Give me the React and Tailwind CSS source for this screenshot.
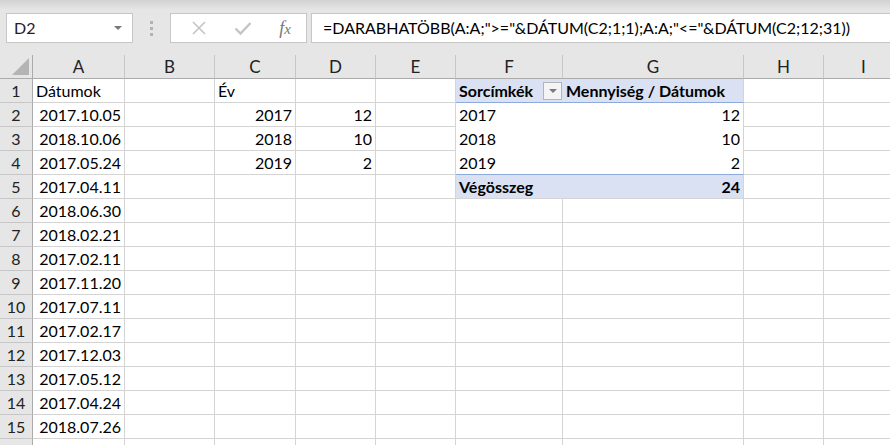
import React from 'react';

const cols = [
  { key: 'A', w: 92 },
  { key: 'B', w: 90 },
  { key: 'C', w: 81 },
  { key: 'D', w: 80 },
  { key: 'E', w: 80 },
  { key: 'F', w: 107 },
  { key: 'G', w: 181 },
  { key: 'H', w: 80 },
  { key: 'I', w: 80 },
];

const dates = [
  '2017.10.05', '2018.10.06', '2017.05.24', '2017.04.11', '2018.06.30',
  '2018.02.21', '2017.02.11', '2017.11.20', '2017.07.11', '2017.02.17',
  '2017.12.03', '2017.05.12', '2017.04.24', '2018.07.26',
];

const years = { 2: ['2017', '12'], 3: ['2018', '10'], 4: ['2019', '2'] };

function cellContent(r, c) {
  if (c === 'A') return r === 1 ? { t: 'Dátumok' } : dates[r - 2] ? { t: dates[r - 2], right: true } : null;
  if (c === 'C') return r === 1 ? { t: 'Év' } : years[r] ? { t: years[r][0], right: true } : null;
  if (c === 'D') return years[r] ? { t: years[r][1], right: true } : null;
  if (c === 'F') {
    if (r === 1) return { t: 'Sorcímkék', bold: true };
    if (years[r]) return { t: years[r][0] };
    if (r === 5) return { t: 'Végösszeg', bold: true };
  }
  if (c === 'G') {
    if (r === 1) return { t: 'Mennyiség / Dátumok', bold: true };
    if (years[r]) return { t: years[r][1], right: true };
    if (r === 5) return { t: '24', bold: true, right: true };
  }
  return null;
}

function Cell({ r, c, w }) {
  const v = cellContent(r, c);
  const inPivot = (c === 'F' || c === 'G') && r <= 5;
  const band = inPivot && (r === 1 || r === 5);
  let cls = 'relative h-6 shrink-0 flex items-center px-[3px] text-[16px] text-black ';
  if (inPivot) {
    cls += band ? 'bg-[#d9e1f2] ' : 'bg-white ';
    cls += c === 'G' ? 'border-r border-r-[#d4d4d4] ' : '';
    if (r === 1) cls += 'border-b border-b-[#8ea9db] ';
    else if (r === 4) cls += 'border-b border-b-[#8ea9db] ';
    else if (r === 5) cls += 'border-b border-b-[#d4d4d4] ';
  } else {
    cls += 'border-r border-b border-[#d4d4d4] ';
  }
  if (v && v.right) cls += 'justify-end ';
  if (v && v.bold) cls += 'font-bold ';
  return (
    <div className={cls} style={{ width: w }}>
      {v && <span className="whitespace-nowrap leading-none">{v.t}</span>}
      {r === 1 && c === 'F' && (
        <div className="absolute right-[1px] top-[3px] w-[19px] h-[18px] border border-[#b4b4b4] bg-[#f4f4f4] flex items-center justify-center">
          <svg width="8" height="5" viewBox="0 0 8 5"><path d="M0 0h8L4 4z" fill="#7a7a7a" /></svg>
        </div>
      )}
    </div>
  );
}

export default function App() {
  const rows = Array.from({ length: 16 }, (_, i) => i + 1);
  return (
    <div className="w-[890px] h-[445px] overflow-hidden bg-[#e6e6e6] font-['Lato','Liberation_Sans',sans-serif]">
      {/* formula bar */}
      <div className="h-[55px] bg-gradient-to-b from-[#d2d2d2] via-[#e6e6e6] via-[18%] to-[#e6e6e6] flex items-start pt-[13px] pl-[6px]">
        <div className="w-[127px] h-[30px] bg-white border border-[#c6c6c6] flex items-center justify-between pl-[7px] pr-[10px]">
          <span className="text-[16px] text-[#222]">D2</span>
          <svg width="8" height="5" viewBox="0 0 8 5"><path d="M0 0h8L4 4z" fill="#777" /></svg>
        </div>
        <div className="w-[37px] h-[30px] flex flex-col items-center justify-center gap-[3px]">
          <div className="w-[3px] h-[3px] bg-[#b2b2b2]" />
          <div className="w-[3px] h-[3px] bg-[#b2b2b2]" />
          <div className="w-[3px] h-[3px] bg-[#b2b2b2]" />
        </div>
        <div className="w-[137px] h-[30px] bg-white border border-[#c6c6c6] flex items-center">
          <div className="w-[50px] flex justify-center pl-[6px]">
            <svg width="16" height="16" viewBox="0 0 16 16"><path d="M2 2l12 12M14 2L2 14" stroke="#c4c4c4" strokeWidth="1.6" /></svg>
          </div>
          <div className="w-[44px] flex justify-center">
            <svg width="18" height="16" viewBox="0 0 18 16"><path d="M1.5 8.5l5 5L16.5 3" stroke="#c4c4c4" strokeWidth="2.4" fill="none" /></svg>
          </div>
          <div className="w-[40px] flex justify-center">
            <span className="font-['Liberation_Serif',serif] italic text-[18px] text-[#777] leading-none">
              f<span className="text-[15px]">x</span>
            </span>
          </div>
        </div>
        <div className="ml-[4px] flex-1 h-[30px] bg-white border border-[#c6c6c6] border-r-0 flex items-center pl-[11px]">
          <span className="text-[16px] text-black whitespace-nowrap">
            =DARABHATÖBB(A:A;"&gt;="&amp;DÁTUM(C2;1;1);A:A;"&lt;="&amp;DÁTUM(C2;12;31))
          </span>
        </div>
      </div>
      {/* column headers */}
      <div className="flex h-6">
        <div className="w-[33px] shrink-0 h-6 border-r border-b border-[#ababab] bg-[#e6e6e6] relative">
          <svg className="absolute right-[3px] bottom-[3px]" width="17" height="17" viewBox="0 0 17 17"><path d="M17 0v17H0z" fill="#b4b4b4" /></svg>
        </div>
        {cols.map((c) => (
          <div
            key={c.key}
            className="shrink-0 h-6 flex items-center justify-center border-r border-r-[#c6c6c6] border-b border-b-[#ababab] bg-[#e6e6e6] text-[17px] text-[#222]"
            style={{ width: c.w }}
          >
            {c.key}
          </div>
        ))}
      </div>
      {/* rows */}
      {rows.map((r) => (
        <div key={r} className="flex h-6">
          <div className="w-[33px] shrink-0 h-6 flex items-center justify-center border-r border-r-[#ababab] border-b border-b-[#c6c6c6] bg-[#e6e6e6] text-[16px] text-[#222]">
            {r <= 15 ? r : ''}
          </div>
          <div className="flex bg-white">
            {cols.map((c) => (
              <Cell key={c.key} r={r} c={c.key} w={c.w} />
            ))}
          </div>
        </div>
      ))}
    </div>
  );
}
